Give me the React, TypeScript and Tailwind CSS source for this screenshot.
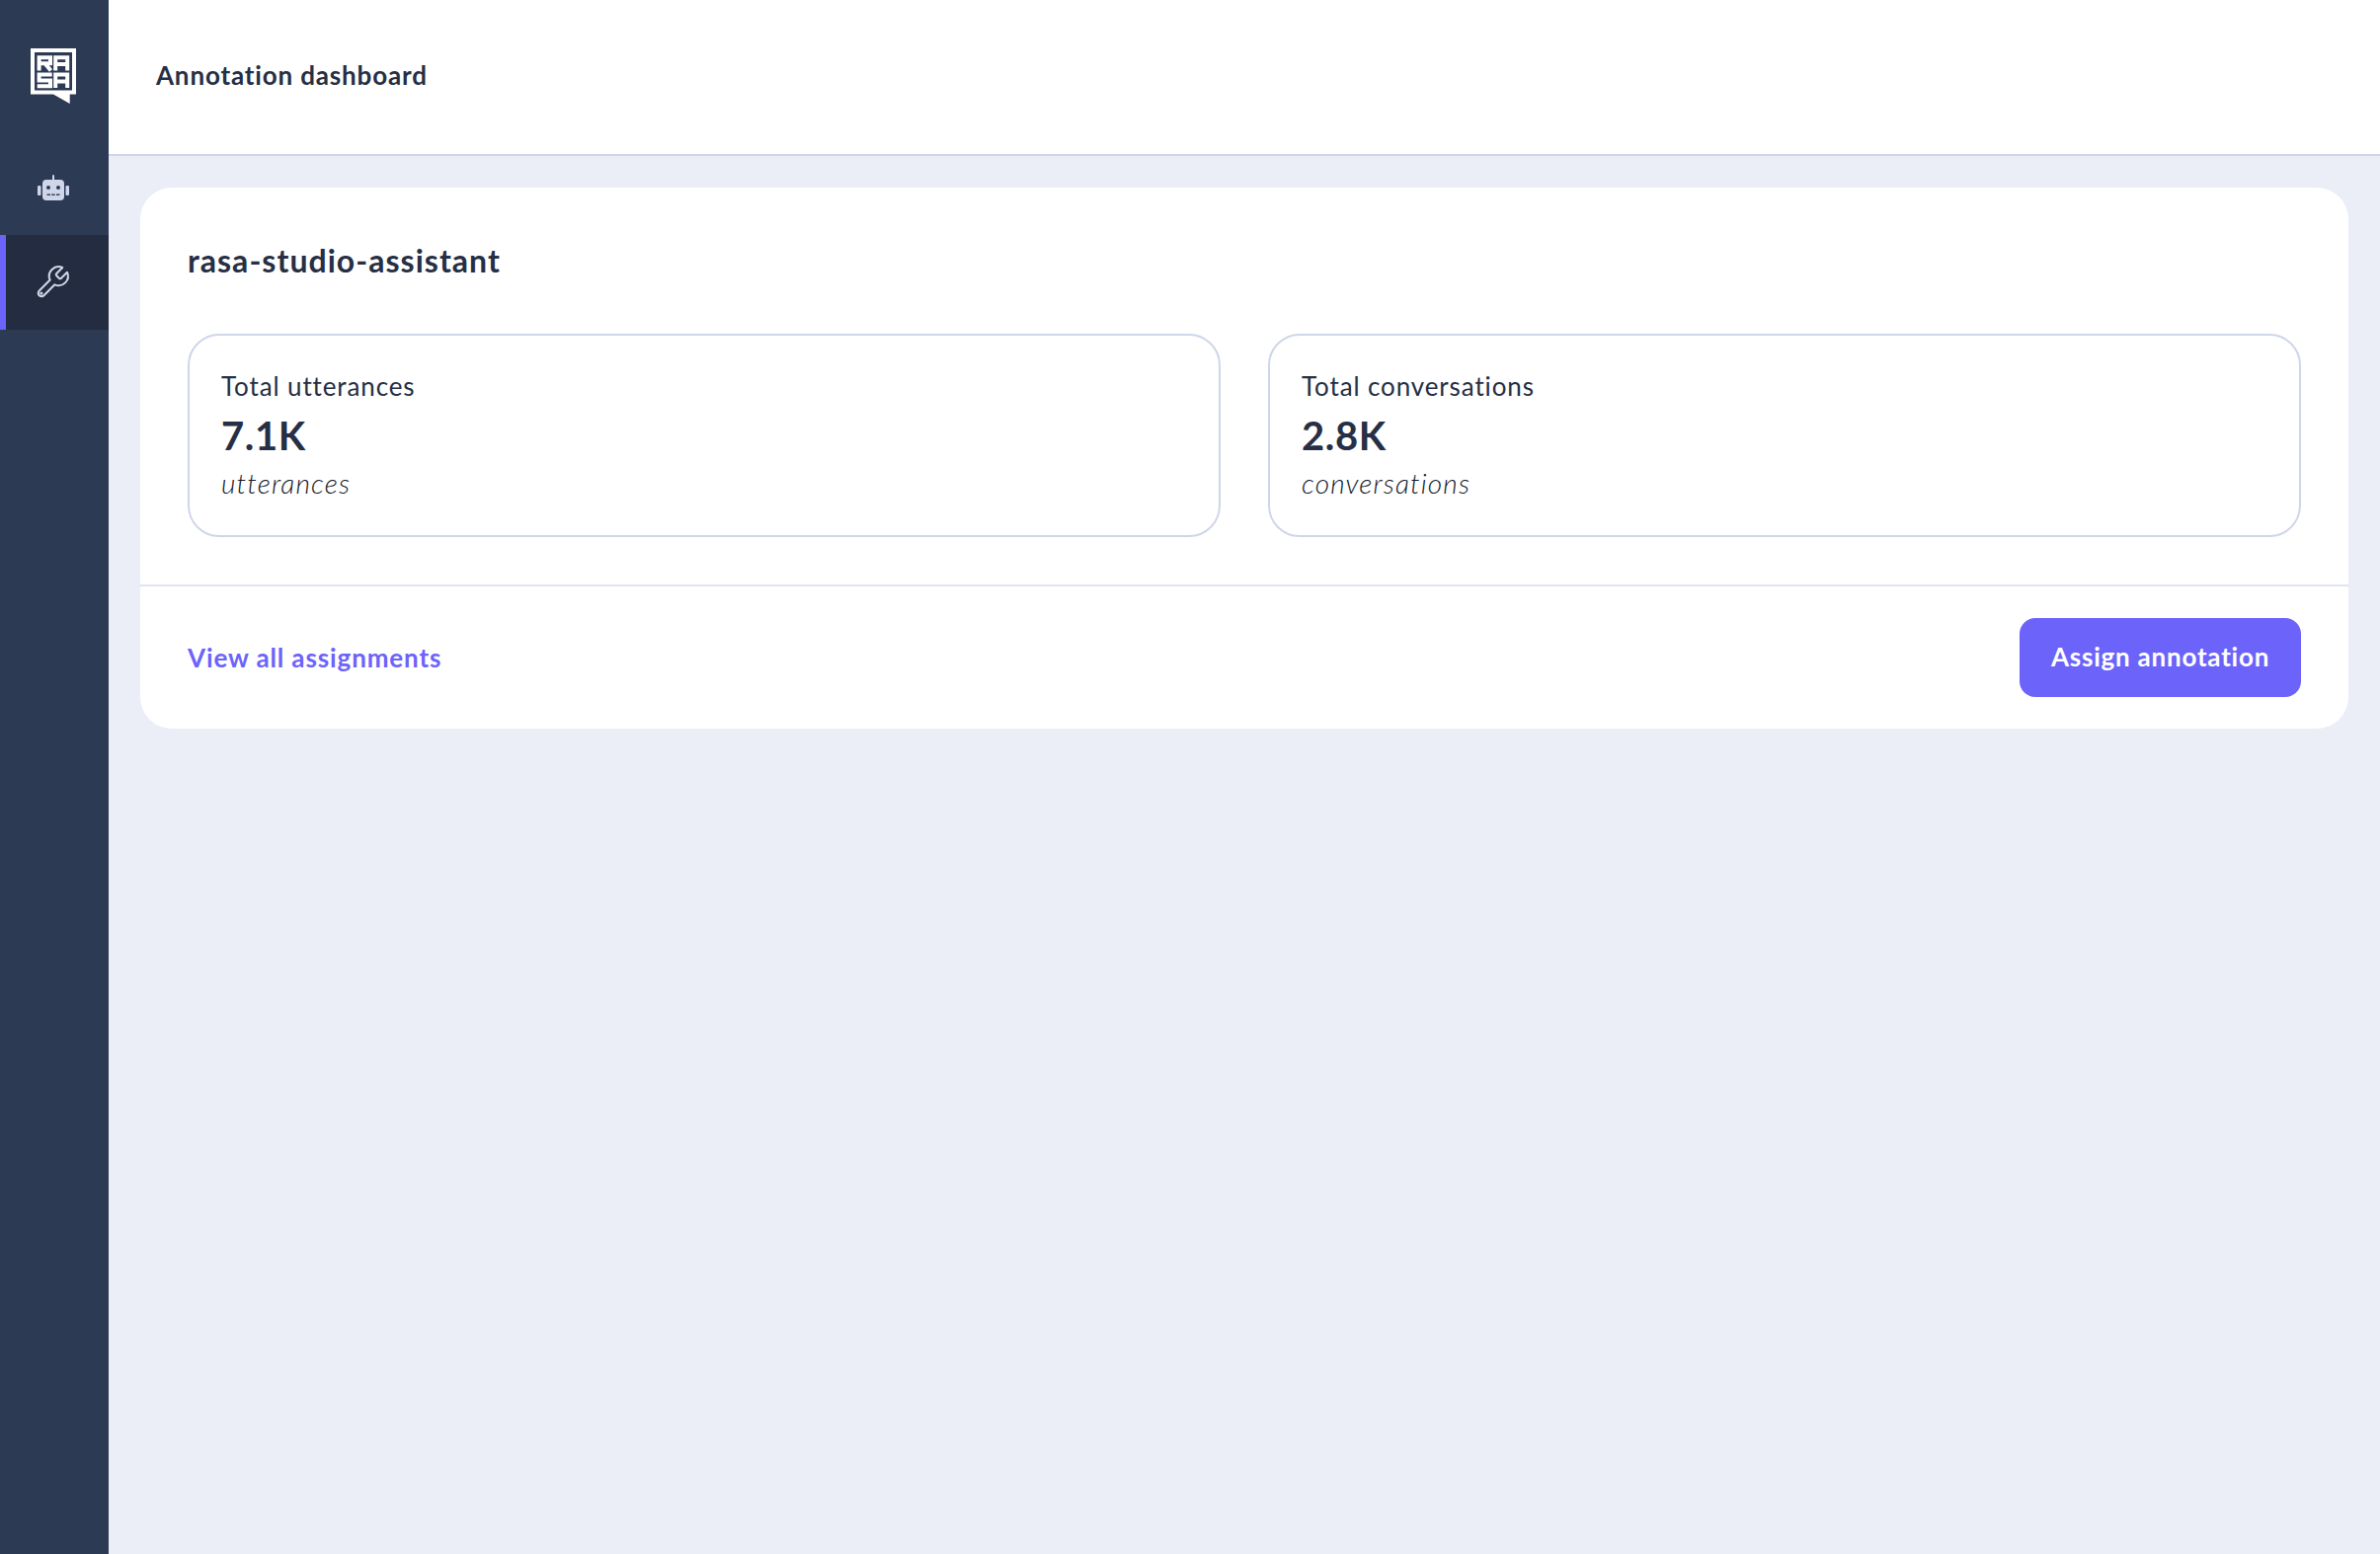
import React from "react";

function Logo() {
  return (
    <svg width="46" height="56" viewBox="0 0 46 56" fill="none">
      <path fillRule="evenodd" d="M0 0H46V46.5H39.7V56L23 46.5H0ZM4 4V42.6H42V4Z" fill="#fff" />
      <g stroke="#fff" strokeWidth="4" fill="none">
        <path d="M8.6 22.6V9.2H20V15.2H8.6M14.5 15.2L20.5 22.6" />
        <path d="M25.2 22.6V9.2H37.2V22.6M25.2 16H37.2" />
        <path d="M21.7 26.6H8.6V32.4H20V38.2H6.7" />
        <path d="M25.2 40V26.6H37.2V40M25.2 33.4H37.2" />
      </g>
    </svg>
  );
}

function Robot() {
  return (
    <svg width="32" height="26" viewBox="0 0 32 26" fill="#cfd6e9">
      <rect x="15" y="0" width="2" height="6" rx="1" />
      <rect x="0" y="11" width="3.5" height="10" rx="1.2" />
      <rect x="28.5" y="11" width="3.5" height="10" rx="1.2" />
      <rect x="5" y="5" width="22" height="21" rx="4" />
      <circle cx="11" cy="13" r="2" fill="#2d3a54" />
      <circle cx="21" cy="13" r="2" fill="#2d3a54" />
      <g fill="#2d3a54">
        <rect x="9.5" y="19.5" width="3.5" height="1.4" />
        <rect x="14.2" y="19.5" width="3.5" height="1.4" />
        <rect x="19" y="19.5" width="3.5" height="1.4" />
      </g>
    </svg>
  );
}

function WrenchIcon() {
  return (
    <svg width="38" height="38" viewBox="0 0 24 24" fill="none" stroke="#cfd6e9" strokeWidth="1.3" strokeLinecap="round" strokeLinejoin="round">
      <path d="M14.7 6.3a1 1 0 0 0 0 1.4l1.6 1.6a1 1 0 0 0 1.4 0l3.77-3.77a6 6 0 0 1-7.94 7.94l-6.91 6.91a2.12 2.12 0 0 1-3-3l6.91-6.91a6 6 0 0 1 7.94-7.94l-3.76 3.76z" />
      <circle cx="5" cy="19" r="0.5" strokeWidth="1" />
    </svg>
  );
}

function Stat({ title, value, unit }: { title: string; value: string; unit: string }) {
  return (
    <div className="flex-1 h-[206px] rounded-[32px] border-2 border-[#cfd6e9] px-[32px] pt-[33px] text-[#262f45]">
      <div className="text-[26px] leading-[36px] tracking-[0.88px]">{title}</div>
      <div className="text-[40px] leading-[60px] font-bold mt-[2px] tracking-[0.6px]">{value}</div>
      <div className="text-[28px] leading-[36px] italic font-light tracking-[1.15px] text-[#141a2c]">{unit}</div>
    </div>
  );
}

export default function App() {
  return (
    <div className="flex h-[1574px] bg-[#ebeef7] font-['Lato','Liberation_Sans',sans-serif] overflow-hidden">
      <aside className="w-[110px] shrink-0 bg-[#2d3a54] flex flex-col">
        <div className="h-[110px] flex justify-center pt-[49px] pr-[2px]">
          <Logo />
        </div>
        <div className="h-[128px] flex items-center justify-center pt-[32px] pr-[2px]">
          <Robot />
        </div>
        <div className="h-[96px] bg-[#232c40] border-l-[6px] border-[#6c63fb] flex items-center justify-center pr-[10px]">
          <WrenchIcon />
        </div>
      </aside>
      <div className="flex-1 flex flex-col min-w-0">
        <header className="h-[158px] shrink-0 bg-white border-b-2 border-[#cfd6e9] flex items-center pl-[48px] pb-[4px]">
          <h1 className="text-[26px] font-bold text-[#262f45] tracking-[0.84px]">Annotation dashboard</h1>
        </header>
        <main className="px-[32px] pt-[32px]">
          <section className="bg-white rounded-[32px]">
            <div className="px-[48px] pt-[48px] pb-[48px]">
              <h2 className="text-[32px] leading-[52px] font-bold text-[#262f45] tracking-[1.03px]">rasa-studio-assistant</h2>
              <div className="flex gap-[48px] mt-[48px]">
                <Stat title="Total utterances" value="7.1K" unit="utterances" />
                <Stat title="Total conversations" value="2.8K" unit="conversations" />
              </div>
            </div>
            <div className="border-t-2 border-[#e0e4f1] px-[48px] py-[32px] flex items-center justify-between">
              <a className="text-[26px] font-bold text-[#6c63fb] tracking-[0.88px]">View all assignments</a>
              <button className="h-[80px] w-[285px] rounded-[16px] bg-[#6c63fb] text-white text-[26px] font-bold tracking-[0.78px] pb-[2px]">Assign annotation</button>
            </div>
          </section>
        </main>
      </div>
    </div>
  );
}
